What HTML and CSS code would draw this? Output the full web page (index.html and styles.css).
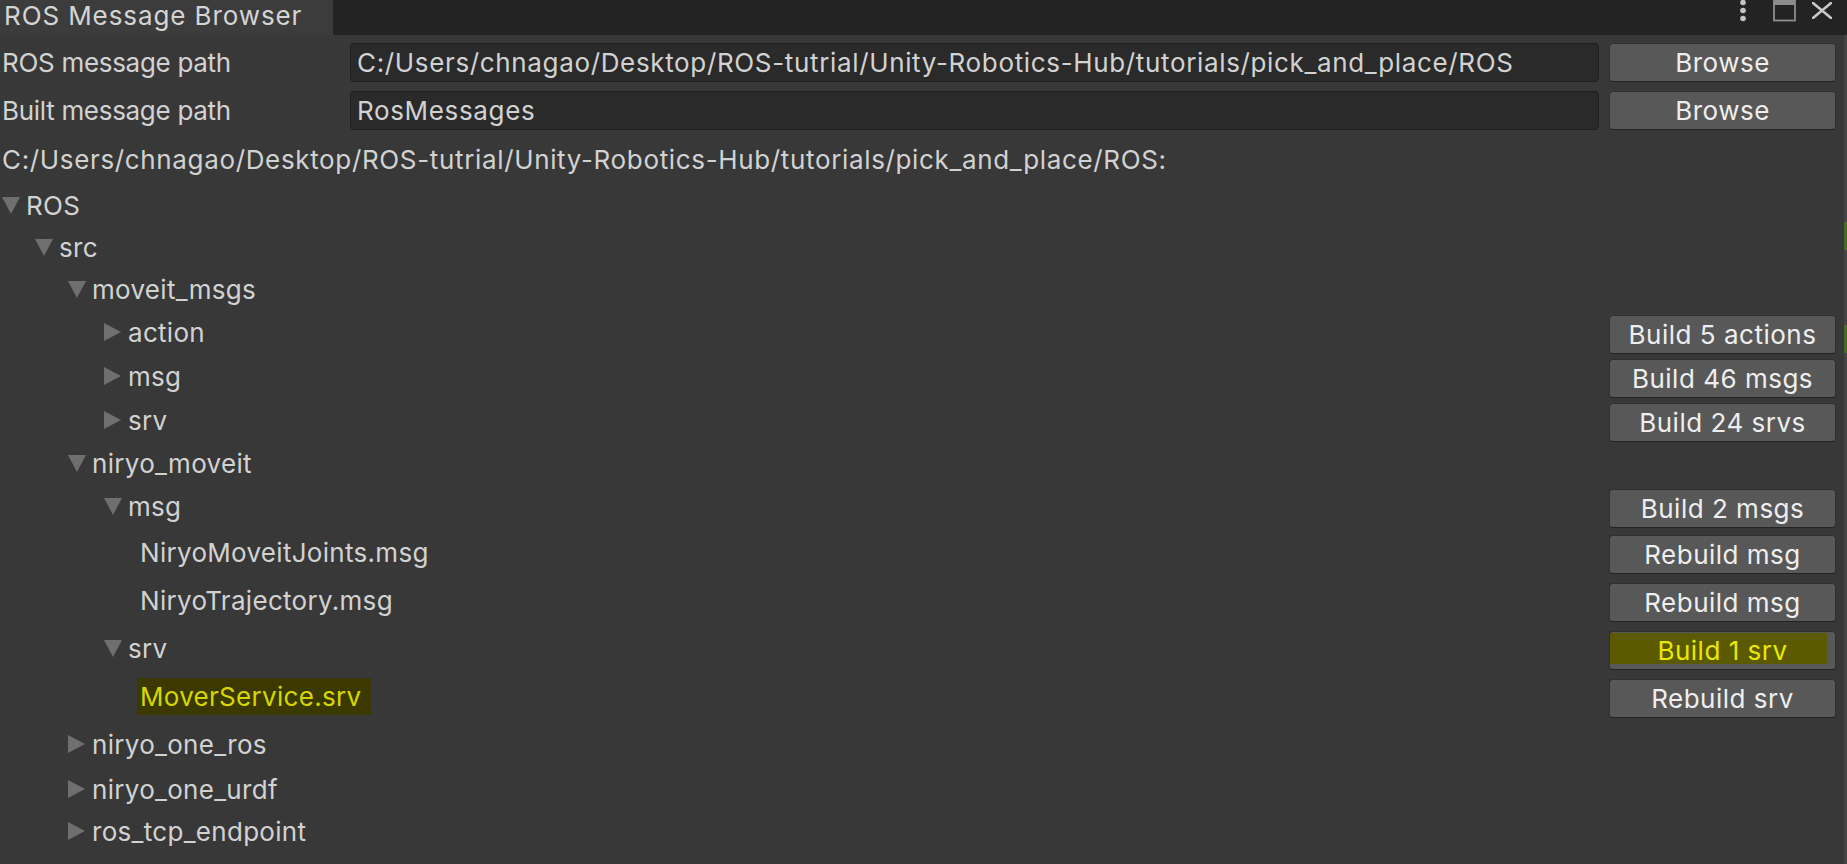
FILE: index.html
```html
<!DOCTYPE html>
<html lang="en">

<head>
    <meta charset="UTF-8">
    <meta name="viewport" content="width=device-width, initial-scale=1.0">
    <title>ROS Message Browser</title>
    <link rel="stylesheet" href="styles.css">
</head>

<body>
    <div class="window">
        <div class="main">
            <div class="tab-bar">
                <div class="tab">ROS Message Browser</div>
                <div class="tab-icons">
                    <svg class="icon-menu" width="8" height="22" viewBox="0 0 8 22">
                        <circle cx="4" cy="2.5" r="2.8" fill="#c4c4c4" />
                        <circle cx="4" cy="10.5" r="2.8" fill="#c4c4c4" />
                        <circle cx="4" cy="18.5" r="2.8" fill="#c4c4c4" />
                    </svg>
                    <svg class="icon-max" width="23" height="22" viewBox="0 0 23 22">
                        <rect x="1" y="-2" width="21" height="22.5" fill="none" stroke="#8c8c8c" stroke-width="1.8" />
                        <rect x="1" y="0" width="21" height="5" fill="#8c8c8c" />
                    </svg>
                    <svg class="icon-close" width="20" height="17" viewBox="0 0 20 17">
                        <path d="M1 1 L19 16 M19 1 L1 16" stroke="#c8c8c8" stroke-width="2.6" stroke-linecap="round" />
                    </svg>
                </div>
            </div>

            <div class="panel">
                <div class="field-row">
                    <div class="field-label">ROS message path</div>
                    <div class="text-field">C:/Users/chnagao/Desktop/ROS-tutrial/Unity-Robotics-Hub/tutorials/pick_and_place/ROS</div>
                    <button class="btn">Browse</button>
                </div>
                <div class="field-row">
                    <div class="field-label">Built message path</div>
                    <div class="text-field">RosMessages</div>
                    <button class="btn">Browse</button>
                </div>

                <div class="path-label">C:/Users/chnagao/Desktop/ROS-tutrial/Unity-Robotics-Hub/tutorials/pick_and_place/ROS:</div>

                <div class="tree">
                    <div class="row l0"><span class="toggle"><span class="arrow down"></span></span><span>ROS</span></div>
                    <div class="row l1"><span class="toggle"><span class="arrow down"></span></span><span>src</span></div>
                    <div class="row l2"><span class="toggle"><span class="arrow down"></span></span><span>moveit_msgs</span></div>
                    <div class="row btn-row l3"><span class="toggle"><span class="arrow right"></span></span><span>action</span>
                        <button class="btn">Build 5 actions</button></div>
                    <div class="row btn-row l3"><span class="toggle"><span class="arrow right"></span></span><span>msg</span>
                        <button class="btn">Build 46 msgs</button></div>
                    <div class="row btn-row l3"><span class="toggle"><span class="arrow right"></span></span><span>srv</span>
                        <button class="btn">Build 24 srvs</button></div>
                    <div class="row l2"><span class="toggle"><span class="arrow down"></span></span><span>niryo_moveit</span></div>
                    <div class="row btn-row l3"><span class="toggle"><span class="arrow down"></span></span><span>msg</span>
                        <button class="btn">Build 2 msgs</button></div>
                    <div class="row tall leaf"><span>NiryoMoveitJoints.msg</span>
                        <button class="btn">Rebuild msg</button></div>
                    <div class="row tall leaf"><span>NiryoTrajectory.msg</span>
                        <button class="btn">Rebuild msg</button></div>
                    <div class="row tall l3"><span class="toggle"><span class="arrow down"></span></span><span>srv</span>
                        <button class="btn marked">Build 1 srv</button></div>
                    <div class="row tall leaf"><span class="marked-label">MoverService.srv</span>
                        <button class="btn">Rebuild srv</button></div>
                    <div class="row tall l2"><span class="toggle"><span class="arrow right"></span></span><span>niryo_one_ros</span></div>
                    <div class="row l2"><span class="toggle"><span class="arrow right"></span></span><span>niryo_one_urdf</span></div>
                    <div class="row l2"><span class="toggle"><span class="arrow right"></span></span><span>ros_tcp_endpoint</span></div>
                </div>
            </div>
        </div>

        <div class="edge">
            <div class="edge-top"></div>
            <div class="edge-gap1"></div>
            <div class="edge-mark"></div>
            <div class="edge-gap2"></div>
            <div class="edge-mark"></div>
        </div>
    </div>
</body>

</html>
```

FILE: styles.css
```css
html,
body {
    margin: 0;
    height: 100%;
    overflow: hidden;
}

body {
    background-color: #383838;
    color: #d2d2d2;
    font-family: Inter, "Noto Sans", sans-serif;
    font-size: 26px;
}

.window {
    display: flex;
    height: 100%;
}

.main {
    flex: 1;
    display: flex;
    flex-direction: column;
    min-width: 0;
}

/* tab bar */
.tab-bar {
    height: 35px;
    background-color: #232323;
    display: flex;
    flex-shrink: 0;
}

.tab {
    width: 329px;
    padding-left: 4px;
    background-color: #3c3c3c;
    line-height: 31px;
    color: #d4d4d4;
    letter-spacing: 0.9px;
    white-space: nowrap;
}

.tab-icons {
    margin-left: auto;
    display: flex;
    align-items: flex-start;
    padding-right: 12px;
}

.icon-menu {
    margin-right: 26px;
}

.icon-max {
    margin-right: 16px;
}

.icon-close {
    margin-top: 2px;
}

/* top fields */
.panel {
    padding: 3px 8px 0 2px;
}

.field-row {
    height: 48px;
    display: flex;
    align-items: center;
}

.field-label {
    width: 348px;
    flex-shrink: 0;
    letter-spacing: -0.3px;
    white-space: nowrap;
}

.text-field {
    flex: 1;
    height: 37px;
    line-height: 37px;
    padding-left: 6px;
    background-color: #2a2a2a;
    border: 1px solid #1f1f1f;
    border-radius: 4px;
    letter-spacing: 0.65px;
    white-space: nowrap;
    overflow: hidden;
}

.btn {
    width: 227px;
    height: 39px;
    margin-left: 10px;
    flex-shrink: 0;
    padding: 0;
    background-color: #585858;
    border: 1px solid #303030;
    border-bottom-color: #232323;
    border-radius: 4px;
    color: #eeeeee;
    font-family: Inter, "Noto Sans", sans-serif;
    font-size: 26px;
    line-height: 35px;
    letter-spacing: 0.5px;
    white-space: nowrap;
}

.path-label {
    height: 50px;
    display: flex;
    align-items: center;
    letter-spacing: 0.65px;
    white-space: nowrap;
}

/* tree */
.row {
    height: 42px;
    display: flex;
    align-items: center;
    letter-spacing: 0.3px;
    white-space: nowrap;
}

.row.btn-row {
    height: 44px;
}

.row.tall {
    height: 48px;
}

.row .btn {
    margin-left: auto;
    margin-top: 4px;
}

.l0 {
    padding-left: 0;
}

.l1 {
    padding-left: 33px;
}

.l2 {
    padding-left: 66px;
}

.l3 {
    padding-left: 102px;
}

.leaf {
    padding-left: 138px;
}

.toggle {
    width: 24px;
    flex-shrink: 0;
    display: flex;
    align-items: center;
}

.arrow {
    display: block;
    width: 0;
    height: 0;
}

.arrow.down {
    border-left: 9px solid transparent;
    border-right: 9px solid transparent;
    border-top: 17px solid #6f6f6f;
}

.arrow.right {
    border-top: 9.5px solid transparent;
    border-bottom: 9.5px solid transparent;
    border-left: 17px solid #6f6f6f;
}

/* yellow marker highlights */
.btn.marked {
    color: #e8e800;
    background: linear-gradient(#5b5a00, #5b5a00) no-repeat 0 1px / calc(100% - 8px) calc(100% - 6px), #585858;
}

.marked-label {
    margin-left: -3px;
    padding: 0 10px 0 3px;
    line-height: 37px;
    background-color: #3b3800;
    color: #d6d600;
}

/* right edge strip */
.edge {
    width: 3px;
    flex-shrink: 0;
    background-color: #444444;
    display: flex;
    flex-direction: column;
}

.edge-top {
    height: 35px;
    background-color: #232323;
}

.edge-gap1 {
    height: 187px;
}

.edge-gap2 {
    height: 75px;
}

.edge-mark {
    height: 28px;
    background-color: #466c27;
}
```
